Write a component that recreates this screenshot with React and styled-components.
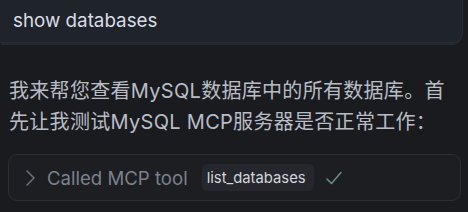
import React from "react";
import styled, { createGlobalStyle } from "styled-components";

const GlobalStyle = createGlobalStyle`
  html, body {
    margin: 0;
    padding: 0;
    background: #1a1b1e;
  }
  body {
    font-family: Inter, "Noto Sans CJK SC", "Liberation Sans", sans-serif;
    -webkit-font-smoothing: antialiased;
  }
`;

const Page = styled.div`
  width: 468px;
  height: 212px;
  overflow: hidden;
  padding-right: 5px;
  box-sizing: border-box;
`;

const UserBubble = styled.div`
  margin-top: -12px;
  height: 55px;
  box-sizing: border-box;
  padding: 20px 13px 0;
  background: #1f232a;
  border: 1px solid #272c35;
  border-left: none;
  border-radius: 0 0 10px 0;
  box-shadow: 0 3px 0 -1px #23272f;
  color: #d9dde5;
  font-size: 18.8px;
  line-height: 24px;
`;

const Reply = styled.p`
  margin: 33px 8px 0 9px;
  color: #b9bdc6;
  font-size: 20px;
  line-height: 31px;
  letter-spacing: 0.3px;
`;

const ToolCard = styled.div`
  margin: 16px 2px 0 8px;
  height: 47px;
  box-sizing: border-box;
  display: flex;
  align-items: center;
  padding-left: 17px;
  background: #1d1e22;
  border: 1px solid #2c2e34;
  border-radius: 9px;
`;

const Chevron = styled.svg`
  flex: none;
  width: 9px;
  height: 16px;
  margin-right: 12px;
`;

const ToolLabel = styled.span`
  color: #7c818c;
  font-size: 18.6px;
  margin-right: 14px;
`;

const ToolName = styled.span`
  display: inline-flex;
  align-items: center;
  height: 27px;
  padding: 0 8px 0 5px;
  background: #25272d;
  border-radius: 5px;
  color: #d3d7de;
  font-size: 14.8px;
  margin-right: 12px;
`;

const Check = styled.svg`
  flex: none;
  width: 16px;
  height: 14px;
`;

export default function App() {
  return (
    <>
      <GlobalStyle />
      <Page>
        <UserBubble>show databases</UserBubble>
        <Reply>
          我来帮您查看MySQL数据库中的所有数据库。首先让我测试MySQL MCP服务器是否正常工作：
        </Reply>
        <ToolCard>
          <Chevron viewBox="0 0 9 16">
            <polyline
              points="1,1 8,8 1,15"
              fill="none"
              stroke="#6b707a"
              strokeWidth="1.5"
              strokeLinecap="round"
              strokeLinejoin="round"
            />
          </Chevron>
          <ToolLabel>Called MCP tool</ToolLabel>
          <ToolName>list_databases</ToolName>
          <Check viewBox="0 0 16 14">
            <polyline
              points="1,8 5.5,12.5 15,1.5"
              fill="none"
              stroke="#6f8f7e"
              strokeWidth="1.5"
              strokeLinecap="round"
              strokeLinejoin="round"
            />
          </Check>
        </ToolCard>
      </Page>
    </>
  );
}
